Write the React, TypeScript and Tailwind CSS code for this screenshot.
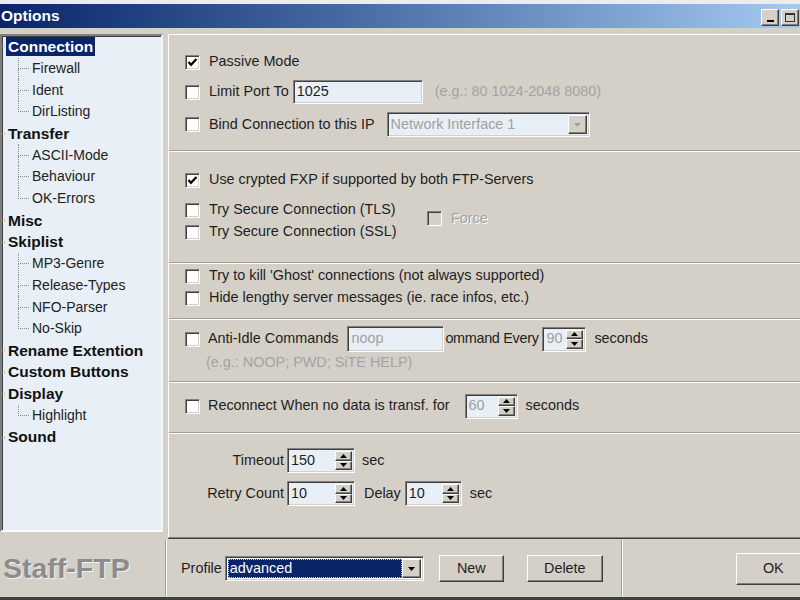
import React from "react";

const sunken =
  "border border-t-[#808080] border-l-[#808080] border-r-white border-b-white shadow-[inset_1px_1px_#404040,inset_-1px_-1px_#d4d0c8]";
const raised =
  "border border-t-white border-l-white border-r-[#404040] border-b-[#404040] shadow-[inset_-1px_-1px_#808080] bg-[#d4d0c8]";

const Check = ({ checked = false, disabled = false }: { checked?: boolean; disabled?: boolean }) => (
  <span
    className={`w-[15px] h-[15px] shrink-0 flex items-center justify-center ${sunken} ${
      disabled ? "bg-[#d4d0c8]" : "bg-white"
    }`}
  >
    {checked && (
      <svg width="11" height="11" viewBox="0 0 11 11">
        <polyline points="1.5,5 4,7.8 9.5,2" fill="none" stroke="#000" strokeWidth="2.2" />
      </svg>
    )}
  </span>
);

const Tri = ({ up = false, color = "#000" }: { up?: boolean; color?: string }) => (
  <svg width="7" height="4" viewBox="0 0 7 4">
    <polygon points={up ? "0,4 7,4 3.5,0" : "0,0 7,0 3.5,4"} fill={color} />
  </svg>
);

const Spin = ({
  value,
  width,
  disabled = false,
}: {
  value: string;
  width: string;
  disabled?: boolean;
}) => (
  <div className={`${sunken} ${width} h-[25px] bg-[#e8eff7] flex items-stretch shrink-0`}>
    <span className={`flex-1 pl-[3px] flex items-center ${disabled ? "text-[#a0a0a0]" : ""}`}>
      {value}
    </span>
    <div className="w-[17px] flex flex-col my-[2px] mr-[2px]">
      <div className={`${raised} flex-1 flex items-center justify-center`}>
        <Tri up />
      </div>
      <div className={`${raised} flex-1 flex items-center justify-center`}>
        <Tri />
      </div>
    </div>
  </div>
);

const Sep = () => <div className="h-[2px] border-t border-t-[#a09e97] border-b border-b-white" />;

type Node = { label: string; children?: string[]; selected?: boolean };

const tree: Node[] = [
  { label: "Connection", children: ["Firewall", "Ident", "DirListing"], selected: true },
  { label: "Transfer", children: ["ASCII-Mode", "Behaviour", "OK-Errors"] },
  { label: "Misc" },
  { label: "Skiplist", children: ["MP3-Genre", "Release-Types", "NFO-Parser", "No-Skip"] },
  { label: "Rename Extention" },
  { label: "Custom Buttons" },
  { label: "Display", children: ["Highlight"] },
  { label: "Sound" },
];

const Sidebar = () => (
  <div className="w-[163px] shrink-0 mb-[8px] bg-[#e9eff6] border-2 border-t-[#808080] border-l-[#808080] border-r-[#f4f4f4] border-b-white shadow-[inset_1px_1px_#404040] flex flex-col text-[14px]">
    {tree.map((n) => (
      <React.Fragment key={n.label}>
        <div className="flex h-[21.7px] items-center">
          <div className="w-[3px] border-b border-dotted border-[#808080] self-center" />
          <span
            className={`ml-[1px] px-[2px] h-[19px] flex items-center text-[15.5px] font-bold leading-none ${
              n.selected ? "bg-[#0a246a] text-white" : "text-[#111]"
            }`}
          >
            {n.label}
          </span>
        </div>
        {n.children?.map((c, i) => (
          <div key={c} className="flex h-[21.7px]">
            <div className="w-[16px] shrink-0" />
            <div className="w-[11px] flex flex-col shrink-0">
              <div className="flex-1 border-l border-b border-dotted border-[#8a8a8a]" />
              <div
                className={`flex-1 ${
                  i < n.children!.length - 1 ? "border-l border-dotted border-[#8a8a8a]" : ""
                }`}
              />
            </div>
            <span className="pl-[3px] flex items-center text-[#222]">{c}</span>
          </div>
        ))}
      </React.Fragment>
    ))}
  </div>
);

const Row = ({ className = "", children }: { className?: string; children: React.ReactNode }) => (
  <div className={`flex items-center whitespace-nowrap ${className}`}>{children}</div>
);

const MainPanel = () => (
  <div className="flex-1 ml-[5px] -mr-[4px] mb-[2px] border border-t-white border-l-white border-r-[#808080] border-b-[#808080] shadow-[0_1px_#404040] flex flex-col">
    {/* section 1 */}
    <div className="pl-[16px] pt-[15px] pb-[13px] flex flex-col">
      <Row className="h-[24px]">
        <Check checked />
        <span className="ml-[9px]">Passive Mode</span>
      </Row>
      <Row className="h-[24px] mt-[6px]">
        <Check />
        <span className="ml-[9px]">Limit Port To</span>
        <div className={`${sunken} ml-[4px] w-[130px] h-[24px] bg-[#e8eff7] flex items-center pl-[3px]`}>
          1025
        </div>
        <span className="ml-[12px] text-[#a3a3a3]">(e.g.: 80 1024-2048 8080)</span>
      </Row>
      <Row className="h-[25px] mt-[8px]">
        <Check />
        <span className="ml-[9px]">Bind Connection to this IP</span>
        <div className={`${sunken} ml-[12px] w-[203px] h-[25px] bg-[#e8eff7] flex items-stretch`}>
          <span className="flex-1 pl-[3px] flex items-center text-[#a0a0a0]">Network Interface 1</span>
          <div className={`${raised} w-[19px] my-[2px] mr-[2px] flex items-center justify-center`}>
            <Tri color="#a0a0a0" />
          </div>
        </div>
      </Row>
    </div>
    <Sep />
    {/* section 2 */}
    <div className="pl-[16px] pt-[17px] pb-[19px] flex flex-col">
      <Row className="h-[22px]">
        <Check checked />
        <span className="ml-[9px]">Use crypted FXP if supported by both FTP-Servers</span>
      </Row>
      <div className="flex items-center mt-[8px]">
        <div className="w-[242px] flex flex-col">
          <Row className="h-[22px]">
            <Check />
            <span className="ml-[9px]">Try Secure Connection (TLS)</span>
          </Row>
          <Row className="h-[22px]">
            <Check />
            <span className="ml-[9px]">Try Secure Connection (SSL)</span>
          </Row>
        </div>
        <Row className="-mt-[4px]">
          <Check disabled />
          <span className="ml-[9px] text-[#a0a0a0] [text-shadow:1px_1px_#fff]">Force</span>
        </Row>
      </div>
    </div>
    <Sep />
    {/* section 3 */}
    <div className="pl-[16px] pt-[1px] pb-[9px] flex flex-col">
      <Row className="h-[22px]">
        <Check />
        <span className="ml-[9px]">Try to kill 'Ghost' connections (not always supported)</span>
      </Row>
      <Row className="h-[22px]">
        <Check />
        <span className="ml-[9px]">Hide lengthy server messages (ie. race infos, etc.)</span>
      </Row>
    </div>
    <Sep />
    {/* section 4 */}
    <div className="pl-[16px] pt-[6px] pb-[8px] flex flex-col">
      <Row className="h-[26px]">
        <Check />
        <span className="ml-[8px]">Anti-Idle Commands</span>
        <div className={`${sunken} ml-[9px] w-[97px] h-[26px] bg-[#e8eff7] flex items-center pl-[3px] text-[#a0a0a0]`}>
          noop
        </div>
        <span className="ml-[1px] w-[97px] shrink-0 tracking-[-0.3px]">ommand Every</span>
        <Spin value="90" width="w-[44px]" disabled />
        <span className="ml-[8px]">seconds</span>
      </Row>
      <Row className="h-[20px] mt-[1px]">
        <span className="ml-[21px] text-[#a3a3a3]">(e.g.: NOOP; PWD; SiTE HELP)</span>
      </Row>
    </div>
    <Sep />
    {/* section 5 */}
    <div className="pl-[16px] pt-[10px] pb-[13px] flex flex-col">
      <Row className="h-[26px]">
        <Check />
        <span className="ml-[8px]">Reconnect When no data is transf. for</span>
        <div className="ml-[15px]">
          <Spin value="60" width="w-[53px]" disabled />
        </div>
        <span className="ml-[8px]">seconds</span>
      </Row>
    </div>
    <Sep />
    {/* section 6 */}
    <div className="pl-[16px] pt-[14px] flex flex-col">
      <Row className="h-[25px]">
        <span className="w-[99px] text-right">Timeout</span>
        <div className="ml-[3px]">
          <Spin value="150" width="w-[68px]" />
        </div>
        <span className="ml-[7px]">sec</span>
      </Row>
      <Row className="h-[25px] mt-[8px]">
        <span className="w-[99px] text-right">Retry Count</span>
        <div className="ml-[3px]">
          <Spin value="10" width="w-[68px]" />
        </div>
        <span className="ml-[9px]">Delay</span>
        <div className="ml-[4px]">
          <Spin value="10" width="w-[57px]" />
        </div>
        <span className="ml-[8px]">sec</span>
      </Row>
    </div>
  </div>
);

const VSep = () => (
  <div className="w-[2px] shrink-0 self-stretch border-l border-l-[#a09e97] border-r border-r-white" />
);

const BottomBar = () => (
  <div className="h-[57px] shrink-0 flex items-center whitespace-nowrap">
    <div className="w-[165px] shrink-0 pl-[3px] text-[28.5px] font-bold text-[#8c8c8c] [text-shadow:1px_1px_#f2f2f2] leading-none">
      Staff-FTP
    </div>
    <VSep />
    <span className="ml-[14px] shrink-0">Profile</span>
    <div className={`${sunken} ml-[3px] w-[199px] h-[25px] shrink-0 bg-white flex items-stretch`}>
      <div className="flex-1 m-[2px] mr-0 bg-[#0a246a] border border-dotted border-[#c8c8c8] flex items-center pl-[1px] text-white">
        advanced
      </div>
      <div className={`${raised} w-[19px] my-[2px] mr-[2px] flex items-center justify-center`}>
        <Tri />
      </div>
    </div>
    <button className={`${raised} ml-[15px] w-[65px] h-[27px] shrink-0 flex items-center justify-center`}>
      New
    </button>
    <button className={`${raised} ml-[23px] w-[76px] h-[27px] shrink-0 flex items-center justify-center`}>
      Delete
    </button>
    <div className="ml-[18px] self-stretch flex shrink-0">
      <VSep />
    </div>
    <button className={`${raised} ml-[113px] w-[75px] h-[32px] flex items-center justify-center shrink-0`}>
      OK
    </button>
  </div>
);

export default function App() {
  return (
    <div className="w-[800px] h-[600px] overflow-hidden bg-[#d4d0c8] flex flex-col font-['Liberation_Sans',Arial,sans-serif] text-[14.4px] text-[#1e1e1e]">
      <div className="h-[4px] bg-[#ececec] shrink-0" />
      <div className="h-[24px] shrink-0 bg-linear-to-r from-[#0a246a] to-[#a6caf0] flex items-center">
        <span className="ml-[1px] text-white font-bold text-[15.5px]">Options</span>
        <div className="ml-auto flex gap-[2px] mr-[1px] pt-[3px]">
          <div className={`${raised} w-[18px] h-[17px] flex items-end justify-center pb-[3px]`}>
            <div className="w-[7px] h-[2px] bg-black" />
          </div>
          <div className={`${raised} w-[18px] h-[17px] flex items-center justify-center`}>
            <div className="w-[10px] h-[9px] border border-t-2 border-[#333]" />
          </div>
        </div>
      </div>
      <div className="flex-1 flex pt-[6px] min-h-0">
        <Sidebar />
        <MainPanel />
      </div>
      <BottomBar />
      <div className="h-[3px] bg-[#404040] shrink-0" />
    </div>
  );
}
